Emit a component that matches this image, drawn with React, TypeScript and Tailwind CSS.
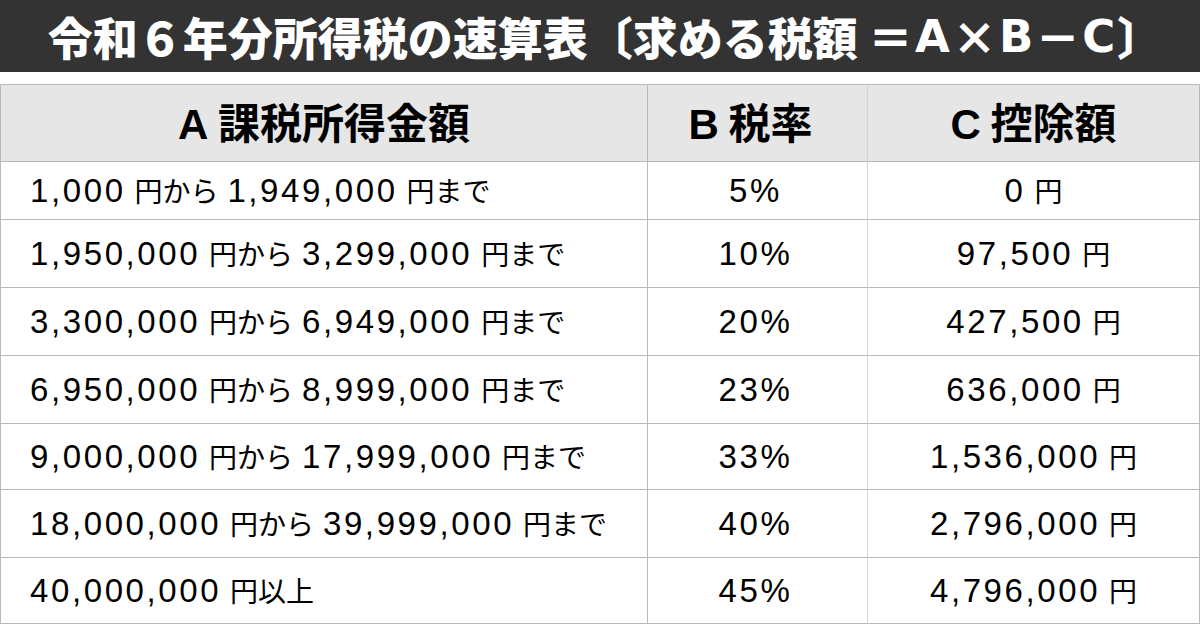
import { Fragment } from 'react'

const rows: { range: string; rate: string; deduction: string; h: string }[] = [
    { range: '1,000 円から 1,949,000 円まで', rate: '5%', deduction: '0 円', h: 'h-[58px]' },
    { range: '1,950,000 円から 3,299,000 円まで', rate: '10%', deduction: '97,500 円', h: 'h-[68px]' },
    { range: '3,300,000 円から 6,949,000 円まで', rate: '20%', deduction: '427,500 円', h: 'h-[68px]' },
    { range: '6,950,000 円から 8,999,000 円まで', rate: '23%', deduction: '636,000 円', h: 'h-[68px]' },
    { range: '9,000,000 円から 17,999,000 円まで', rate: '33%', deduction: '1,536,000 円', h: 'h-[66px]' },
    { range: '18,000,000 円から 39,999,000 円まで', rate: '40%', deduction: '2,796,000 円', h: 'h-[68px]' },
    { range: '40,000,000 円以上', rate: '45%', deduction: '4,796,000 円', h: 'h-[66px]' },
]

// numbers in a Helvetica-like face, the rest in the CJK face
function Mixed({ text }: { text: string }) {
    const parts = text.split(/([0-9,%]+| )/).filter(Boolean)
    return (
        <span className="whitespace-pre">
            {parts.map((p, i) => {
                if (p === ' ')
                    return (
                        <span key={i} className="font-['Liberation_Sans',sans-serif] text-[32px]">
                            {' '}
                        </span>
                    )
                if (/^[0-9,%]+$/.test(p))
                    return (
                        <span key={i} className="font-['Liberation_Sans',sans-serif] text-[33px] tracking-[2.6px]">
                            {p}
                        </span>
                    )
                return (
                    <span key={i} className="font-['Noto_Sans_CJK_JP',sans-serif] text-[28px]">
                        {p}
                    </span>
                )
            })}
        </span>
    )
}

function HeadLabel({ letter, label }: { letter: string; label: string }) {
    return (
        <span className="font-bold text-[42px] leading-none text-black whitespace-pre">
            <span className="font-['Liberation_Sans',sans-serif]">{letter}</span>
            <span className="font-['Noto_Sans_CJK_JP',sans-serif]"> {label}</span>
        </span>
    )
}

export default function App() {
    const line = 'border-[#b9b9b9]'
    const latin = "font-['DejaVu_Sans',sans-serif] font-bold px-[2px]"
    return (
        <div className="w-[1200px] h-[625px] bg-white overflow-hidden text-black">
            {/* Title bar */}
            <div className="h-[72px] bg-[#333333] flex items-center justify-center pl-[10px] text-white font-black text-[45px] leading-none font-['Noto_Sans_CJK_JP',sans-serif] whitespace-pre">
                <span>令和６年分所得税の速算表〔求める税額 ＝</span>
                <span className={latin}>A</span>
                <span>×</span>
                <span className={latin}>B</span>
                <span>－</span>
                <span className={latin}>C</span>
                <span>〕</span>
            </div>

            {/* Table */}
            <div className={`mt-[12px] grid grid-cols-[647px_220px_1fr] border-t border-l ${line}`}>
                <div className={`h-[77px] bg-[#e6e6e6] border-r border-b ${line} flex items-center justify-center`}>
                    <HeadLabel letter="A" label="課税所得金額" />
                </div>
                <div className={`h-[77px] bg-[#e6e6e6] border-r border-r-[#d4d4d4] border-b border-b-[#b9b9b9] flex items-center justify-center pr-[14px]`}>
                    <HeadLabel letter="B" label="税率" />
                </div>
                <div className={`h-[77px] bg-[#e6e6e6] border-r border-b ${line} flex items-center justify-center`}>
                    <HeadLabel letter="C" label="控除額" />
                </div>

                {rows.map((r) => (
                    <Fragment key={r.range}>
                        <div className={`${r.h} border-r border-b ${line} flex items-center pl-[29px]`}>
                            <Mixed text={r.range} />
                        </div>
                        <div className={`${r.h} border-r border-r-[#d4d4d4] border-b border-b-[#b9b9b9] flex items-center justify-center pr-[4px]`}>
                            <Mixed text={r.rate} />
                        </div>
                        <div className={`${r.h} border-r border-b ${line} flex items-center justify-center`}>
                            <Mixed text={r.deduction} />
                        </div>
                    </Fragment>
                ))}
            </div>
        </div>
    )
}
